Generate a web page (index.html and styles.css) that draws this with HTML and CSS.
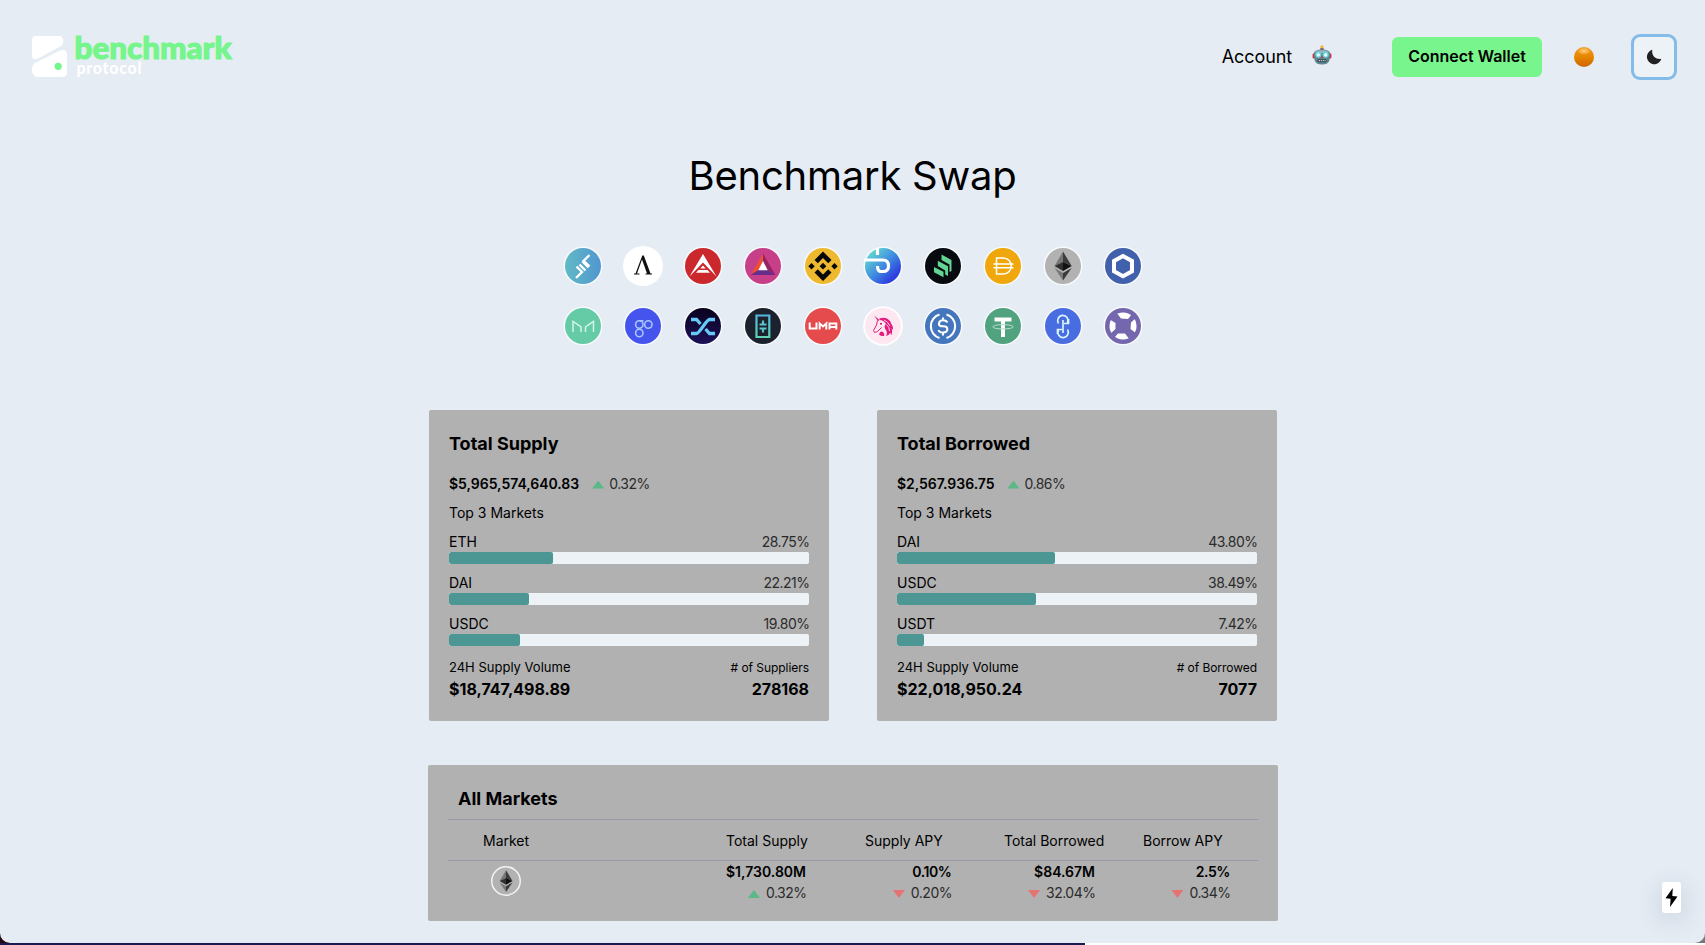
FILE: index.html
```
<!DOCTYPE html>
<html lang="en">
<head>
<meta charset="utf-8">
<title>Benchmark Swap</title>
<link rel="stylesheet" href="styles.css">
</head>
<body>
<div class="window">
  <header class="topbar">
    <svg class="logo" width="202" height="46" viewBox="0 0 202 46">
      <path d="M4 0H27C32 0 33 7 29 10L6 22.500Q0 25 0 19V4Q0 0 4 0Z" fill="#fff"/>
      <path d="M3 27L27 15Q35 12 35 19V36Q35 41 30 41H6C-1 41 -2 30 3 27Z" fill="#fff"/>
      <circle cx="26.200" cy="30.300" r="3.600" fill="#76f58c"/>
      <text class="logo-name" x="42.500" y="23.300" textLength="157" lengthAdjust="spacingAndGlyphs">benchmark</text>
      <text class="logo-sub" x="44.500" y="37.500" textLength="65">protocol</text>
    </svg>
    <nav class="actions">
      <a class="account">Account</a>
      <svg class="robot" width="20" height="20" viewBox="0 0 20 20">
        <rect x="9.100" y="2" width="1.800" height="4" fill="#59456f"/><ellipse cx="10" cy="4" rx="2" ry=".9" fill="#63407d"/>
        <circle cx="10" cy="1.900" r="1.700" fill="#f4b53a"/>
        <rect x=".6" y="8.500" width="2.500" height="5" rx="1" fill="#c83443"/><rect x="16.900" y="8.500" width="2.500" height="5" rx="1" fill="#c83443"/>
        <path d="M1.800 8Q3 4.500 10 4.500T18.200 8L17.500 15Q16.500 19.500 10 19.500T2.500 15Z" fill="#5f8793"/>
        <path d="M3 7Q10 3 17 7L16 8H4Z" fill="#93b5bd"/>
        <circle cx="6.300" cy="9.800" r="3" fill="#6fd5e2"/><circle cx="13.700" cy="9.800" r="3" fill="#6fd5e2"/>
        <circle cx="6.300" cy="9.800" r="1.600" fill="#e7ffff"/><circle cx="13.700" cy="9.800" r="1.600" fill="#e7ffff"/>
        <path d="M10 10.500L11.500 13H8.500Z" fill="#d8343e"/>
        <rect x="5.500" y="14.200" width="9" height="3" rx="1" fill="#32464e"/><path d="M6.800 15.700H13.500" stroke="#bfd0d3" stroke-width="1.300" stroke-dasharray="1.200 .7"/>
      </svg>
      <button class="connect">Connect Wallet</button>
      <span class="orb"></span>
      <button class="mode"><svg width="16" height="16" viewBox="0 0 16 16"><path d="M6.300 .8A7.300 7.300 0 1 0 15.300 9.700C10.500 10.800 5.200 7.200 6.300 .8Z" fill="#202022"/></svg></button>
    </nav>
  </header>

  <main>
    <h1>Benchmark Swap</h1>
    <div class="coins">
      <svg viewBox="0 0 40 40"><defs><linearGradient id="g1"><stop stop-color="#62bac6"/><stop offset="1" stop-color="#5096d0"/></linearGradient></defs><circle class="rim" cx="20" cy="20" r="19.500"/><circle cx="20" cy="20" r="18" fill="url(#g1)"/><path d="M13 32L19 26L13.500 20.500M16.500 18.500L22.500 24.500M19.500 15.500L25.500 21.500M26.500 9L20.500 15L26.500 20.500" class="w" stroke-width="2.400"/></svg>
      <svg viewBox="0 0 40 40"><circle cx="20" cy="20" r="20" fill="#fff"/><path d="M19.300 9.500H20.800L27.500 27.500H29V28.500H22.500V27.500H24L19 13.500L14 27.500H16.500V28.500H11V27.500H12.500Z" fill="#111"/></svg>
      <svg viewBox="0 0 40 40"><circle class="rim" cx="20" cy="20" r="19.500"/><circle cx="20" cy="20" r="18" fill="#cb282e"/><path d="M20 8L33.500 30.500L20 16.500L6.500 30.500Z" fill="#fff"/><path d="M17.300 22.500L20 19.500L22.700 22.500ZM15.500 24H24.500L27 26.800H13Z" fill="#fff"/></svg>
      <svg viewBox="0 0 40 40"><circle class="rim" cx="20" cy="20" r="19.500"/><circle cx="20" cy="20" r="18" fill="#c73e89"/><path d="M20 7.500L7.500 29L15.500 24L20 15Z" fill="#eb5035"/><path d="M20 7.500L32.500 29L24.500 24L20 15Z" fill="#952463"/><path d="M7.500 29H32.500L24.500 24H15.500Z" fill="#662d8b"/><path d="M20 15L24.700 24.200H15.300Z" fill="#fff"/></svg>
      <svg viewBox="0 0 40 40"><circle class="rim" cx="20" cy="20" r="19.500"/><circle cx="20" cy="20" r="18" fill="#efb92f"/><path d="M20 5.500L28.500 14L25.200 17.300L20 12.100L14.800 17.300L11.500 14ZM20 35L28.500 26.500L25.200 23.200L20 28.400L14.800 23.200L11.500 26.500ZM20 16.800L23.400 20.200L20 23.600L16.600 20.200ZM8.500 17L11.700 20.200L8.500 23.400L5.300 20.200ZM31.500 17L34.700 20.200L31.500 23.400L28.300 20.200Z" fill="#080808"/></svg>
      <svg viewBox="0 0 40 40"><defs><linearGradient id="g2" x1="0" y1="0" x2="1" y2="1"><stop offset=".1" stop-color="#67dbd0"/><stop offset=".5" stop-color="#3f8be0"/><stop offset=".8" stop-color="#2d40df"/></linearGradient></defs><circle class="rim" cx="20" cy="20" r="19.500"/><circle cx="20" cy="20" r="18" fill="url(#g2)"/><path d="M1 14H20Q25.500 14 25.500 20Q25.500 25.500 20 25.500H18Q14.500 25.500 14.500 20M14.500 2V9" fill="none" stroke="#fff" stroke-width="3.200"/></svg>
      <svg viewBox="0 0 40 40"><circle class="rim" cx="20" cy="20" r="19.500"/><circle cx="20" cy="20" r="18" fill="#070b0f"/><path d="M18.500 8.500L28.500 14V25L26.500 26V18.500L18.500 14ZM14.800 14.800L25 20.200V30L22.200 28.500V24.500L14.800 20ZM11 21L20.500 25.800V31.300L11 26.200Z" fill="#62d493"/></svg>
      <svg viewBox="0 0 40 40"><circle class="rim" cx="20" cy="20" r="19.500"/><circle cx="20" cy="20" r="18" fill="#f0a70b"/><path d="M13.500 12H20C31 12 31 28 20 28H13.500ZM10.500 18H30.500M10.500 21.700H30.500" class="w" stroke-width="1.500"/></svg>
      <svg viewBox="0 0 40 40"><circle class="rim" cx="20" cy="20" r="19.500"/><circle cx="20" cy="20" r="18" fill="#b2b2b2"/><g id="eth"><path d="M20 5.500L11.500 20L20 16Z" fill="#767676"/><path d="M20 5.500L28.700 20L20 16Z" fill="#3c3c3c"/><path d="M11.500 20L20 16V25Z" fill="#303030"/><path d="M28.700 20L20 16V25Z" fill="#101010"/><path d="M11.500 22L20 27V34.500Z" fill="#777"/><path d="M28.700 22L20 27V34.500Z" fill="#3b3b3b"/></g></svg>
      <svg viewBox="0 0 40 40"><circle class="rim" cx="20" cy="20" r="19.500"/><circle cx="20" cy="20" r="18" fill="#4261ad"/><path d="M20 10L29 15V25.300L20 30.300L11 25.300V15Z" fill="none" stroke="#fff" stroke-width="4"/></svg>

      <svg viewBox="0 0 40 40"><circle class="rim" cx="20" cy="20" r="19.500"/><circle cx="20" cy="20" r="18" fill="#65cba6"/><path d="M10 26V15.500L18 21V26M30.500 26V15.500L22.500 21V26" fill="none" stroke="#d5f3e9" stroke-width="1.500"/></svg>
      <svg viewBox="0 0 40 40"><circle class="rim" cx="20" cy="20" r="19.500"/><circle cx="20" cy="20" r="18" fill="#4454ed"/><g fill="none" stroke="#a7c7fb" stroke-width="1.600"><circle cx="16.300" cy="18.500" r="3.700"/><circle cx="25.300" cy="18.500" r="3.700"/><circle cx="16.300" cy="27" r="3.700"/><path d="M16.500 14.800H20.500"/></g></svg>
      <svg viewBox="0 0 40 40"><defs><linearGradient id="g3" x2="0" y2="1"><stop stop-color="#08021d"/><stop offset="1" stop-color="#1d1159"/></linearGradient></defs><circle class="rim" cx="20" cy="20" r="19.500"/><circle cx="20" cy="20" r="18" fill="url(#g3)"/><path d="M8 13.500H13.500L17.500 18M8 27.500H13.500Q15 27.500 20 20.500T26.500 13.500H32M22.500 23L26.500 27.500H32" fill="none" stroke="#66caf8" stroke-width="3.300"/></svg>
      <svg viewBox="0 0 40 40"><defs><linearGradient id="g4" x2="0" y2="1"><stop stop-color="#55b5df"/><stop offset="1" stop-color="#61d4b4"/></linearGradient></defs><circle class="rim" cx="20" cy="20" r="19.500"/><circle cx="20" cy="20" r="18" fill="#1b222d"/><path d="M13.500 9.500H26.300V31H13.500Z" fill="none" stroke="url(#g4)" stroke-width="2.200"/><path d="M16.500 18.500H23.500M20 14.500V18.500M16.500 22.500H23.500M20 22.500V26.500" stroke="#5bc4ca" stroke-width="2.200"/></svg>
      <svg viewBox="0 0 40 40"><circle class="rim" cx="20" cy="20" r="19.500"/><circle cx="20" cy="20" r="18" fill="#e54b4c"/><path d="M6.700 16.500V22.500H13.500V16.500M16.700 23.500V17.500L20 20.500L23.300 17.500V23.500M26.500 23.500V17.500H33.300V23.500M26.500 21H33" fill="none" stroke="#fff" stroke-width="2"/></svg>
      <svg viewBox="0 0 40 40"><circle cx="20" cy="20" r="19.800" fill="#fff"/><circle cx="20" cy="20" r="18" fill="#fde7f1"/><path d="M11 9.500L16.500 14L15 15Z" fill="#e31b7f"/><path d="M14.500 14.500L13.500 19L10.500 24.500L11.500 26.500L14.500 25.500L18.500 21.500" fill="none" stroke="#e31b7f" stroke-width="1"/><path d="M16.500 12.500Q24 10 28.500 17L27 16.500Q30.500 19.500 30 24L28.500 22Q30 26 28 29.500L27.500 26.500Q26 29.500 23 30Q25 26.500 22.500 23.500Q20.500 20 23 18Q20.500 14 16.500 14Z" fill="#e31b7f"/><path d="M21 14Q25 15.500 27 20M23.500 18.500Q26.500 21 26.500 25" fill="none" stroke="#fde7f1" stroke-width=".9"/><path d="M16 28.500Q17 24.500 20 26Q22 28 21 30Q18 30.500 16 28.500Z" fill="#e31b7f"/><circle cx="18" cy="17.800" r="1" fill="#b41462"/></svg>
      <svg viewBox="0 0 40 40"><circle class="rim" cx="20" cy="20" r="19.500"/><circle cx="20" cy="20" r="18" fill="#4376bc"/><path d="M16.500 8.500A12.300 12.300 0 0 0 16.500 32M23.500 8.500A12.300 12.300 0 0 1 23.500 32M24.300 16.500Q23.500 14.300 20 14.300T16 17.300T20 20.200T24.300 23.300T20 26.500T15.700 24M20 11.500V14.500M20 26.500V29.500" fill="none" stroke="#fff" stroke-width="2.100"/></svg>
      <svg viewBox="0 0 40 40"><circle class="rim" cx="20" cy="20" r="19.500"/><circle cx="20" cy="20" r="18" fill="#51a27e"/><path d="M11.500 11.500H28.500V15.500H22V31H18V15.500H11.500Z" fill="#fff"/><ellipse cx="20" cy="20.800" rx="10.300" ry="2.200" fill="none" stroke="#b9ddce"/></svg>
      <svg viewBox="0 0 40 40"><circle class="rim" cx="20" cy="20" r="19.500"/><circle cx="20" cy="20" r="18" fill="#486de0"/><path d="M15.500 17.500A5.200 5.200 0 1 1 24.500 17M24.500 23.500A5.200 5.200 0 1 1 15.500 24M20 14V27M25.500 13V17.500H21M14.500 28V23.500H19" fill="none" stroke="#d9f3ff" stroke-width="1.700"/></svg>
      <svg viewBox="0 0 40 40"><circle class="rim" cx="20" cy="20" r="19.500"/><circle cx="20" cy="20" r="18" fill="#7567ad"/><circle cx="20" cy="20" r="13.500" fill="#fff"/><path d="M6 13L13 6L18 12.500L25 13L29 8L33 12L28 16.500L27.500 23L34 28L27 34L22 27.500L15 27.500L11 32L7 28L12.500 23L12.500 17Z" fill="#7567ad"/></svg>
    </div>

    <div class="cards">
      <section class="card">
        <h2>Total Supply</h2>
        <p class="sum"><b>$5,965,574,640.83</b><i class="up"></i><span>0.32%</span></p>
        <p class="top">Top 3 Markets</p>
        <div class="market"><p>ETH<span>28.75%</span></p><div class="bar"><div style="width:28.75%"></div></div></div>
        <div class="market"><p>DAI<span>22.21%</span></p><div class="bar"><div style="width:22.21%"></div></div></div>
        <div class="market"><p>USDC<span>19.80%</span></p><div class="bar"><div style="width:19.8%"></div></div></div>
        <div class="foot"><span>24H Supply Volume</span><small># of Suppliers</small></div>
        <div class="totals"><b>$18,747,498.89</b><b>278168</b></div>
      </section>
      <section class="card">
        <h2>Total Borrowed</h2>
        <p class="sum"><b>$2,567.936.75</b><i class="up"></i><span>0.86%</span></p>
        <p class="top">Top 3 Markets</p>
        <div class="market"><p>DAI<span>43.80%</span></p><div class="bar"><div style="width:43.8%"></div></div></div>
        <div class="market"><p>USDC<span>38.49%</span></p><div class="bar"><div style="width:38.49%"></div></div></div>
        <div class="market"><p>USDT<span>7.42%</span></p><div class="bar"><div style="width:7.42%"></div></div></div>
        <div class="foot"><span>24H Supply Volume</span><small># of Borrowed</small></div>
        <div class="totals"><b>$22,018,950.24</b><b>7077</b></div>
      </section>
    </div>

    <section class="all">
      <h2>All Markets</h2>
      <div class="thead"><span>Market</span><span>Total Supply</span><span>Supply APY</span><span>Total Borrowed</span><span>Borrow APY</span></div>
      <div class="trow">
        <svg class="eth" viewBox="0 0 40 40"><circle cx="20" cy="20" r="19" fill="#b2b2b2" stroke="#f4f4f4" stroke-width="2"/><use href="#eth"/></svg>
        <div><b>$1,730.80M</b><p><i class="up"></i>0.32%</p></div>
        <div><b class="rate">0.10%</b><p><i class="down"></i>0.20%</p></div>
        <div><b>$84.67M</b><p><i class="down"></i>32.04%</p></div>
        <div><b class="rate">2.5%</b><p><i class="down"></i>0.34%</p></div>
      </div>
    </section>
  </main>
  <div class="flash"><svg width="13" height="19" viewBox="0 0 13 19"><path d="M7.800 0L.5 10.300L5.600 10.800L5 19L12.500 8.500L7.300 8Z" fill="#000"/></svg></div>
</div>
</body>
</html>
```
FILE: styles.css
```
* { box-sizing: border-box; }
body {
  margin: 0; height: 945px; overflow: hidden; color: #000;
  font: 14px/21px Inter, "Liberation Sans", sans-serif;
  background: linear-gradient(90deg, #240613 0 12px, #1c1a4e 12px 1085px, #fff 1085px 1690px, #77777b 1690px) 0 0 / 100% 943px no-repeat,
    linear-gradient(90deg, #1c1a4e 1085px, #fff 1085px);
}
h1, h2, p { margin: 0; }
b { font-weight: 600; }
.window { position: relative; height: 943px; background: #e5ecf4; border-radius: 0 0 10px 10px; overflow: hidden; }

.topbar { display: flex; justify-content: space-between; height: 114px; padding: 36px 31px 0 32px; }
.logo { overflow: visible; }
.logo-name { font: 900 30.500px Lato, sans-serif; fill: #76f58c; stroke: #76f58c; stroke-width: 1.100px; }
.logo-sub { font: 900 16px Lato, sans-serif; fill: #fff; }
.actions { display: flex; align-items: center; height: 42px; }
.account { font-size: 18px; line-height: 27px; margin-top: -1px; letter-spacing: -.1px; }
.robot { margin: -4px 60px 0 20px; }
button { border: 0; padding: 0; font-family: inherit; color: #000; }
.connect { width: 150px; height: 40px; padding-bottom: 2px; border-radius: 6px; background: #78f58c; font-size: 16px; font-weight: 600; }
.orb { width: 20px; height: 20px; margin: 0 40px 0 32px; border-radius: 50%; background: radial-gradient(7px 4px at 50% 20%, #ffd08a, rgba(255, 195, 100, .5) 60%, transparent), linear-gradient(#ee9a1c, #e88500 50%, #cb6200); }
.mode { display: flex; align-items: center; justify-content: center; width: 40px; height: 40px; border-radius: 6px; background: #edf2f7; box-shadow: 0 0 0 3px #84bbe9; }

h1 { padding-top: 32px; height: 132px; text-align: center; font-size: 40px; line-height: 60px; font-weight: 400; letter-spacing: -.25px; }
.coins { display: grid; grid-template-columns: repeat(10, 40px); gap: 20px; width: 580px; margin: 0 auto; position: relative; left: .5px; }
.coins svg { width: 40px; height: 40px; display: block; }
.rim { fill: #fff; fill-opacity: .75; }
.w { fill: none; stroke: #fff; }

.cards { display: flex; justify-content: center; gap: 48px; padding: 64px 0 44px 1px; }
.card { width: 400px; height: 311px; padding: 20px; background: #b1b1b1; border-radius: 2px; }
h2 { font-size: 18px; line-height: 27px; font-weight: 700; }
.sum { display: flex; align-items: center; margin: 16px 0 8px; }
.up, .down { display: inline-block; width: 12px; height: 8px; background: #5cb987; clip-path: polygon(50% 0, 100% 100%, 0 100%); }
.down { background: #e57373; clip-path: polygon(0 0, 100% 0, 50% 100%); }
.sum .up { margin: 2px 5px 0 13px; }
.sum b { letter-spacing: -.03px; }
.sum span, .market span, .trow p { color: #2b2b2b; letter-spacing: -.5px; }
.market span, .trow p { margin-right: -.5px; }
.market { padding-top: 8px; }
.market p, .foot, .totals { display: flex; justify-content: space-between; }
.bar { height: 12px; background: #edf2f7; border-radius: 2px; overflow: hidden; }
.bar div { height: 12px; background: #4c9694; border-radius: 2px; }
.foot { margin-top: 10px; position: relative; top: .7px; font-size: 13px; }
.foot small { font-size: 12px; letter-spacing: -.05px; }
.totals { font-size: 16px; line-height: 24px; }
.totals b { font-weight: 700; }

.all { width: 850px; height: 156px; margin: 0 auto; padding: 20px; position: relative; left: .5px; background: #b1b1b1; border-radius: 2px; }
.all h2 { height: 34px; padding-left: 10px; }
.thead { display: grid; grid-template-columns: 243px 139px 139px 139px auto; height: 42px; padding: 10px 0 0 35px; border: solid #9899a8; border-width: 1px 0; }
.trow { display: grid; grid-template-columns: 213px 145px 145.500px 143.500px 135px; text-align: right; }
.eth { width: 30px; height: 30px; margin: 5px 0 0 43px; }
.trow b, .trow p { display: block; }
.rate { letter-spacing: -.4px; }
.trow .up, .trow .down { margin-right: 6px; }

.flash { position: absolute; left: 1662px; top: 882px; display: flex; align-items: center; justify-content: center; width: 19px; height: 31px; border-radius: 3px; background: #fff; box-shadow: 0 6px 26px rgba(50, 70, 90, .2); }
```
